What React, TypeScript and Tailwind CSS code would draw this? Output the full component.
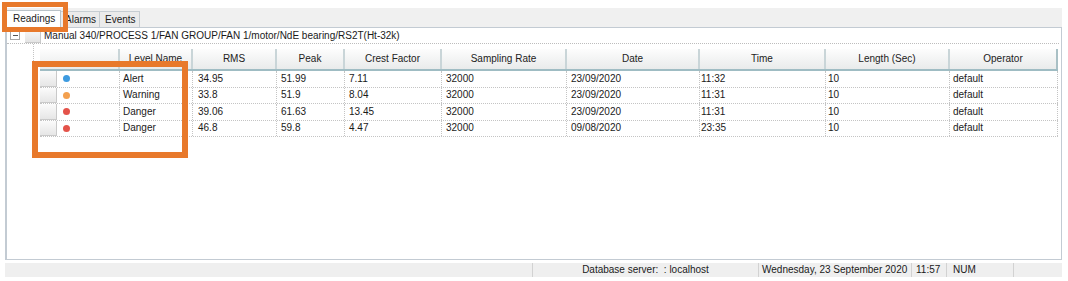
import React from 'react';

const columns = [
  { key: 'sel', label: '', w: 'w-[80px]' },
  { key: 'level', label: 'Level Name', w: 'w-[73px]' },
  { key: 'rms', label: 'RMS', w: 'w-[84px]' },
  { key: 'peak', label: 'Peak', w: 'w-[68px]' },
  { key: 'crest', label: 'Crest Factor', w: 'w-[97px]' },
  { key: 'rate', label: 'Sampling Rate', w: 'w-[125px]' },
  { key: 'date', label: 'Date', w: 'w-[133px]' },
  { key: 'time', label: 'Time', w: 'w-[126px]' },
  { key: 'len', label: 'Length (Sec)', w: 'w-[124px]' },
  { key: 'op', label: 'Operator', w: 'w-[108px]' },
];

const readings = [
  { dot: 'bg-[#3d9be0]', level: 'Alert', rms: '34.95', peak: '51.99', crest: '7.11', rate: '32000', date: '23/09/2020', time: '11:32', len: '10', op: 'default' },
  { dot: 'bg-[#f3a04f]', level: 'Warning', rms: '33.8', peak: '51.9', crest: '8.04', rate: '32000', date: '23/09/2020', time: '11:31', len: '10', op: 'default' },
  { dot: 'bg-[#e4534a]', level: 'Danger', rms: '39.06', peak: '61.63', crest: '13.45', rate: '32000', date: '23/09/2020', time: '11:31', len: '10', op: 'default' },
  { dot: 'bg-[#e4534a]', level: 'Danger', rms: '46.8', peak: '59.8', crest: '4.47', rate: '32000', date: '09/08/2020', time: '23:35', len: '10', op: 'default' },
];

function RowButton() {
  return (
    <div className="w-[17px] h-full bg-gradient-to-b from-[#fbfbfb] to-[#e6e6e6] border-r border-b border-[#c9c9c9]" />
  );
}

export default function App() {
  return (
    <div className="relative w-[1068px] h-[281px] bg-white text-[10px] text-[#1a1a1a] font-['Liberation_Sans',Arial,sans-serif] leading-none">
      <div className="pl-[5px] pr-[6px] pt-[8px]">
        {/* tab strip */}
        <div className="h-[19px] bg-[#f0f0f0] flex items-end pl-[1px]">
          <div className="h-[17px] w-[55px] bg-white border border-b-0 border-[#b9c2c8] flex items-center pl-[6px]">Readings</div>
          <div className="h-[16px] w-[39px] border-r border-t border-[#c6cdd2] bg-[#ebebeb] flex items-center pl-[4px]">Alarms</div>
          <div className="h-[16px] w-[40px] border-r border-t border-[#c6cdd2] bg-[#ebebeb] flex items-center pl-[5px]">Events</div>
        </div>

        {/* main panel */}
        <div className="h-[233px] border border-[#c3cbd3] border-l-[2px] bg-white flex flex-col">
          {/* tree node */}
          <div className="h-[16px] flex items-center border-b border-dotted border-[#bdbdbd] mr-[2px]">
            <div className="ml-[3px] w-[10px] h-[9px] border border-[#a6a6a6] bg-white flex items-center justify-center">
              <div className="w-[5px] h-px bg-[#555]" />
            </div>
            <div className="ml-[5px] w-[16px] h-[15px] self-end bg-gradient-to-b from-[#fbfbfb] to-[#e4e4e4] border-r border-b border-[#c9c9c9]" />
            <span className="ml-[3px]">Manual 340/PROCESS 1/FAN GROUP/FAN 1/motor/NdE bearing/RS2T(Ht-32k)</span>
          </div>

          <div className="flex flex-1">
            {/* tree connector */}
            <div className="w-[27px] border-r border-dotted border-[#c4c4c4] mb-[120px]" />
            <div className="pl-[6px] pt-[5px]">
              {/* header */}
              <div className="flex h-[22px] border-b-[2px] border-[#9fbcc3]">
                {columns.map((c, i) => (
                  <div
                    key={c.key}
                    className={`${c.w} h-full flex items-center justify-center bg-gradient-to-b from-[#fdfdfd] to-[#e9ebeb] text-[#222] border-r-[2px] ${i === columns.length - 1 ? 'border-[#a9c0c5]' : 'border-[#c9d5d8]'}`}
                  >
                    {c.label}
                  </div>
                ))}
              </div>
              {/* rows */}
              {readings.map((r, i) => (
                <div key={i} className="flex h-[16.5px] border-b border-dotted border-[#c4c4c4]">
                  <div className="w-[80px] h-full flex items-center border-r border-dotted border-[#c4c4c4]">
                    <RowButton />
                    <div className={`ml-[6px] w-[7px] h-[7px] rounded-full ${r.dot}`} />
                  </div>
                  <div className="w-[73px] pl-[3px] flex items-center border-r border-dotted border-[#c4c4c4]">{r.level}</div>
                  <div className="w-[84px] pl-[5px] flex items-center border-r border-dotted border-[#c4c4c4]">{r.rms}</div>
                  <div className="w-[68px] pl-[4px] flex items-center border-r border-dotted border-[#c4c4c4]">{r.peak}</div>
                  <div className="w-[97px] pl-[4px] flex items-center border-r border-dotted border-[#c4c4c4]">{r.crest}</div>
                  <div className="w-[125px] pl-[4px] flex items-center border-r border-dotted border-[#c4c4c4]">{r.rate}</div>
                  <div className="w-[133px] pl-[4px] flex items-center border-r border-dotted border-[#c4c4c4]">{r.date}</div>
                  <div className="w-[126px] pl-[1px] flex items-center border-r border-dotted border-[#c4c4c4]">{r.time}</div>
                  <div className="w-[124px] pl-[2px] flex items-center border-r border-dotted border-[#c4c4c4]">{r.len}</div>
                  <div className="w-[108px] pl-[3px] flex items-center border-r border-dotted border-[#c4c4c4]">{r.op}</div>
                </div>
              ))}
            </div>
          </div>
        </div>

        {/* status bar */}
        <div className="mt-[3px] h-[14px] bg-[#efefef] flex items-center">
          <div className="w-[528px] h-full border-r border-[#d2d2d2]" />
          <div className="w-[226px] h-full flex items-center justify-center border-r border-[#d2d2d2]">Database server:&nbsp; : localhost</div>
          <div className="w-[153px] h-full flex items-center pl-[3px] border-r border-[#d2d2d2]">Wednesday, 23 September 2020</div>
          <div className="w-[35px] h-full flex items-center pl-[4px] border-r border-[#d2d2d2]">11:57</div>
          <div className="w-[67px] h-full flex items-center pl-[6px] border-r border-[#d2d2d2]">NUM</div>
          <div className="flex-1 h-full" />
        </div>
      </div>

      {/* highlight boxes */}
      <div className="absolute left-[2px] top-[2px] w-[66px] h-[30px] border-[5px] border-[#e8792b]" />
      <div className="absolute left-[32px] top-[61px] w-[156px] h-[97px] border-[6px] border-[#e8792b]" />
    </div>
  );
}
